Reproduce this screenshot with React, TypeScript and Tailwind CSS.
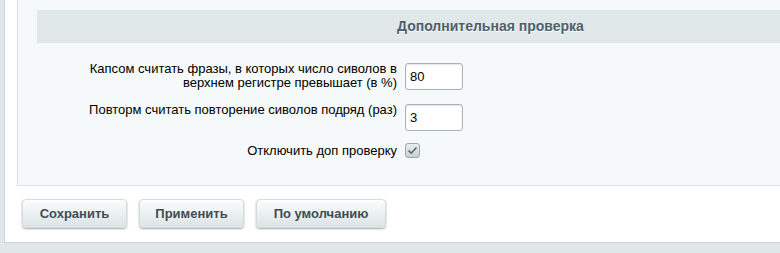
export default function App() {
  return (
    <div
      className="w-[780px] h-[253px] overflow-hidden bg-[#dfe7e9] pl-[4px]"
      style={{ fontFamily: '"Liberation Sans", Arial, sans-serif' }}
    >
      <div className="bg-white border-l border-b border-[#ccd6d9] pl-[12px] pb-[14px]">
        {/* Настройки */}
        <div className="bg-[#f5f9f9] border-l border-b border-[#d8e1e3] pt-[10px] pb-[27px]">
          <div className="ml-[19px] h-[33px] bg-[#e0e8ea] flex items-center pl-[360px]">
            <span className="text-[14px] font-bold text-[#4b5f6c] [text-shadow:0_1px_0_#ffffff]">
              Дополнительная проверка
            </span>
          </div>

          <div className="grid grid-cols-[379px_auto] gap-x-[8px] gap-y-[13px] mt-[19px] text-[13px] leading-[14px] text-black">
            <div className="text-right">
              Капсом считать фразы, в которых число сиволов в
              <br />
              верхнем регистре превышает (в %)
            </div>
            <div className="pt-[1px]">
              <Field value="80" />
            </div>

            <div className="text-right">Повторм считать повторение сиволов подряд (раз)</div>
            <div className="pt-[1px]">
              <Field value="3" />
            </div>

            <div className="text-right">Отключить доп проверку</div>
            <div className="flex">
              <span className="w-[15px] h-[15px] -mt-[1px] rounded-[3px] border border-[#9ea8ad] bg-gradient-to-b from-[#e9edee] to-[#c9d0d3] flex items-center justify-center">
                <svg width="11" height="9" viewBox="0 0 11 9" fill="none">
                  <path d="M1.5 4.5 L4.2 7.2 L9.5 1.5" stroke="#56636b" strokeWidth="1.6" />
                </svg>
              </span>
            </div>
          </div>
        </div>

        {/* Кнопки */}
        <div className="flex gap-[12px] pl-[5px] mt-[13px]">
          <Btn className="w-[105px]">Сохранить</Btn>
          <Btn className="w-[105px]">Применить</Btn>
          <Btn className="w-[130px]">По умолчанию</Btn>
        </div>
      </div>
    </div>
  );
}

function Field({ value }: { value: string }) {
  return (
    <input
      defaultValue={value}
      className="w-[58px] h-[27px] rounded-[3px] border border-[#a9b4ba] bg-white px-[4px] text-[13px] text-black outline-none shadow-[inset_0_1px_2px_rgba(0,0,0,0.12)]"
      style={{ fontFamily: '"Liberation Sans", Arial, sans-serif' }}
    />
  );
}

function Btn({ children, className }: { children: React.ReactNode; className: string }) {
  return (
    <button
      className={
        "h-[29px] rounded-[4px] bg-gradient-to-b from-[#fbfdfd] to-[#dce4e6] text-[13px] font-bold text-[#3f4c55] shadow-[0_1px_2px_rgba(0,0,0,0.35),inset_0_1px_0_#ffffff] border border-[#d3dcdf] " +
        className
      }
    >
      {children}
    </button>
  );
}
